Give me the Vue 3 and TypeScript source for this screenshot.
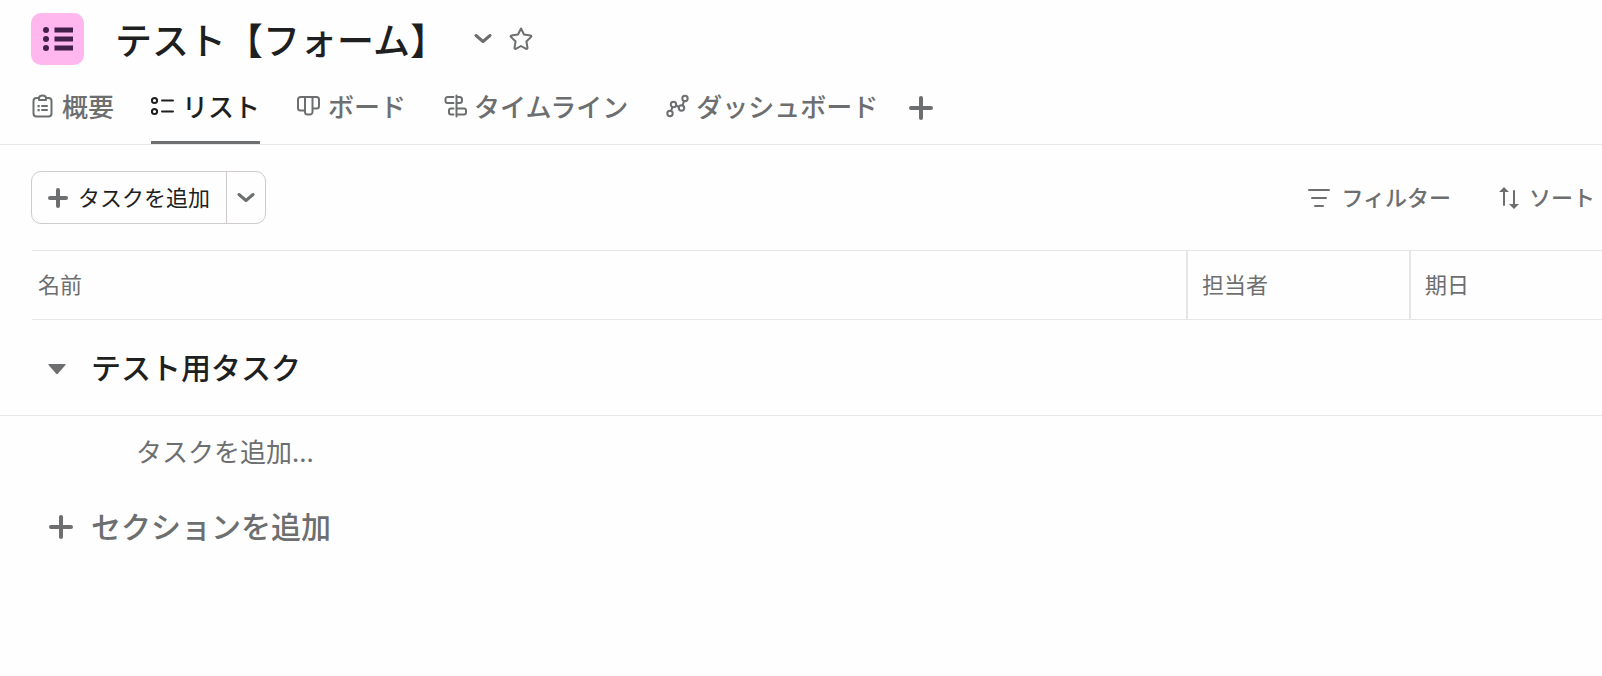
<script setup lang="ts">
import { ref } from 'vue'

type TabId = 'overview' | 'list' | 'board' | 'timeline' | 'dashboard'

const tabs: { id: TabId; label: string }[] = [
  { id: 'overview', label: '概要' },
  { id: 'list', label: 'リスト' },
  { id: 'board', label: 'ボード' },
  { id: 'timeline', label: 'タイムライン' },
  { id: 'dashboard', label: 'ダッシュボード' },
]

const active = ref<TabId>('list')
const open = ref(true)
</script>

<template>
  <div class="page">
    <header class="title-row">
      <span class="project-icon">
        <svg width="30" height="24" viewBox="0 0 30 24" fill="currentColor" aria-hidden="true">
          <circle cx="3" cy="3" r="3" /><circle cx="3" cy="12" r="3" /><circle cx="3" cy="21" r="3" />
          <path d="M11.500 .5h18.500v5h-18.500zM11.500 9.500h18.500v5h-18.500zM11.500 18.500h18.500v5h-18.500z" />
        </svg>
      </span>
      <h1>テスト【フォーム】</h1>
      <button class="icon-button" aria-label="プロジェクトのアクション">
        <svg width="18" height="10" viewBox="0 0 18 10" class="stroke-chevron"><path d="M2 1.500l7 6L16 1.500" /></svg>
      </button>
      <button class="icon-button star" aria-label="お気に入りに追加">
        <svg width="24" height="24" viewBox="0 0 24 24" class="stroke">
          <path d="M12 1.500l3 6 6.600 1c.8.1 1 .9.5 1.400l-4.700 4.600 1.100 6.400c.1.800-.6 1.300-1.300 1L12 19l-5.200 2.900c-.7.300-1.400-.2-1.300-1l1.100-6.400-4.700-4.600c-.5-.5-.3-1.300.5-1.400l6.600-1z" />
        </svg>
      </button>
    </header>

    <nav class="tabs">
      <a
        v-for="tab in tabs"
        :key="tab.id"
        href="#"
        class="tab"
        :class="{ active: tab.id === active }"
        @click.prevent="active = tab.id"
      >
        <svg width="24" height="24" viewBox="0 0 24 24" class="stroke" aria-hidden="true">
          <template v-if="tab.id === 'overview'">
            <path d="M7.500 4H5.500a3 3 0 0 0-3 3v12.500a3 3 0 0 0 3 3h12a3 3 0 0 0 3-3V7a3 3 0 0 0-3-3h-2M8 6h7V4c0-1.500-1.200-2.500-3.500-2.500S8 2.500 8 4zM11 12h5M11 16h5" />
            <path class="solid" d="M6.500 11h2.200v2.200H6.500zM6.500 15h2.200v2.200H6.500z" />
          </template>
          <template v-else-if="tab.id === 'list'">
            <circle cx="3.500" cy="6.500" r="2.600" /><circle cx="3.500" cy="17.500" r="2.600" />
            <path d="M11 6.500h11M11 17.500h11" />
          </template>
          <template v-else-if="tab.id === 'board'">
            <path d="M8 16.500H3.500a2.500 2.500 0 0 1-2.500-2.500V5.500A2.500 2.500 0 0 1 3.500 3h16A2.500 2.500 0 0 1 22 5.500V12a2.500 2.500 0 0 1-2.500 2.500h-4M8 3v15a2.500 2.500 0 0 0 2.500 2.500H13a2.500 2.500 0 0 0 2.500-2.500V3" />
          </template>
          <template v-else-if="tab.id === 'timeline'">
            <path d="M13.500 1.500v21M10.500 9H4.500A2 2 0 0 1 2.500 7V5a2 2 0 0 1 2-2h6M13.500 3h3A2.500 2.500 0 0 1 19 5.500v1A2.500 2.500 0 0 1 16.500 9h-3M10.500 20.500H8a2 2 0 0 1-2-2v-2a2 2 0 0 1 2-2h2.500M13.500 14.500H21a2 2 0 0 1 2 2v2a2 2 0 0 1-2 2h-7.500" />
          </template>
          <template v-else>
            <circle cx="5" cy="19.500" r="2.700" /><circle cx="8.500" cy="10.500" r="2.700" />
            <circle cx="16.500" cy="14" r="2.700" /><circle cx="20" cy="4.500" r="2.700" />
            <path d="M6 17l1.500-4M11 11.500l3 1.500M17.500 11.500l1.500-4.500" />
          </template>
        </svg>
        {{ tab.label }}
      </a>
      <button class="icon-button add-view" aria-label="ビューを追加">
        <svg width="24" height="24" viewBox="0 0 24 24" class="stroke-plus"><path d="M12 2v20M2 12h20" /></svg>
      </button>
    </nav>

    <div class="toolbar">
      <div class="split">
        <button class="add-task">
          <svg width="20" height="20" viewBox="0 0 20 20" class="stroke-plus"><path d="M10 2v16M2 10h16" /></svg>
          <span class="label">タスクを追加</span>
        </button>
        <button class="more" aria-label="その他の追加オプション">
          <svg width="18" height="10" viewBox="0 0 18 10" class="stroke-chevron"><path d="M2 1.500l7 6L16 1.500" /></svg>
        </button>
      </div>
      <div class="tools">
        <button class="tool">
          <svg width="24" height="20" viewBox="0 0 24 20" class="stroke"><path d="M2 2h20M5 10h14M8 18h8" /></svg>
          <span class="label">フィルター</span>
        </button>
        <button class="tool">
          <svg width="20" height="24" viewBox="0 0 20 24" class="stroke">
            <path d="M5 4v15M15 5v15" />
            <path class="solid" d="M5 1l5 5H0zM15 23l5-5H10z" />
          </svg>
          <span class="label">ソート</span>
        </button>
      </div>
    </div>

    <table class="columns">
      <thead>
        <tr>
          <th scope="col">名前</th>
          <th scope="col" class="assignee">担当者</th>
          <th scope="col" class="due">期日</th>
        </tr>
      </thead>
    </table>

    <section>
      <h2>
        <button class="toggle" :aria-expanded="open" aria-label="セクションを折りたたむ" @click="open = !open">
          <svg width="18" height="10" viewBox="0 0 18 10" fill="currentColor"><path d="M1 0h16q1 0 .5 1L10 9.500q-1 1-2 0L.5 1Q0 0 1 0z" /></svg>
        </button>
        <span class="label">テスト用タスク</span>
      </h2>
      <button v-if="open" class="new-task"><span class="label">タスクを追加...</span></button>
    </section>

    <button class="add-section">
      <svg width="24" height="24" viewBox="0 0 24 24" class="stroke-section"><path d="M12 2v20M2 12h20" /></svg>
      <span class="label">セクションを追加</span>
    </button>
  </div>
</template>

<style>
body {
  margin: 0;
  background: #fefefe;
}
</style>

<style scoped>
.page {
  color: #1e1f21;
  font-family: "Noto Sans CJK JP", sans-serif;
  overflow: hidden;
}

button {
  display: flex;
  align-items: center;
  margin: 0;
  padding: 0;
  border: 0;
  background: none;
  color: #6d6e6f;
  font: inherit;
  white-space: nowrap;
  cursor: pointer;
}

svg {
  display: block;
  flex: none;
}

.label {
  padding-bottom: 4px;
}

.stroke,
.stroke-chevron,
.stroke-section,
.stroke-plus {
  fill: none;
  stroke: currentColor;
  stroke-width: 2;
  stroke-linecap: round;
  stroke-linejoin: round;
}

.stroke-chevron {
  stroke-width: 3;
}

.stroke-section {
  stroke-width: 4;
}

.stroke-plus {
  stroke-width: 4;
}

.solid {
  fill: currentColor;
  stroke: none;
}

.title-row {
  display: flex;
  align-items: center;
  height: 52px;
  padding: 13px 31px 0;
}

.project-icon {
  display: flex;
  align-items: center;
  justify-content: center;
  width: 53px;
  height: 52px;
  margin-right: 31px;
  border-radius: 10px;
  background: #ffb7ed;
  color: #43204c;
}

h1 {
  margin: 0 27px 0 0;
  font-size: 37px;
  font-weight: 500;
  line-height: 52px;
}

.star {
  margin-left: 17px;
}

.tabs {
  display: flex;
  gap: 37px;
  height: 79px;
  padding: 0 31px;
  border-bottom: 1px solid #e6e6e6;
}

.tab {
  display: flex;
  align-items: center;
  gap: 7px;
  box-sizing: border-box;
  padding-top: 6px;
  border-bottom: 3px solid transparent;
  color: #6d6e6f;
  font-size: 26px;
  font-weight: 500;
  line-height: 38px;
  text-decoration: none;
  white-space: nowrap;
}

.tab.active {
  border-bottom-color: #6d6e6f;
  color: #1e1f21;
}

.add-view {
  margin-left: -6px;
  padding-top: 6px;
}

.toolbar {
  display: flex;
  align-items: center;
  justify-content: space-between;
  padding: 26px 7px 26px 31px;
  font-size: 22px;
}

.split {
  display: flex;
  box-sizing: border-box;
  height: 53px;
  border: 1px solid #cfcbcb;
  border-radius: 10px;
}

.add-task {
  gap: 10px;
  padding: 0 16px;
  color: #1e1f21;
}

.add-task svg {
  color: #6d6e6f;
}

.more {
  padding: 0 10px;
  border-left: 1px solid #cfcbcb;
}

.tools {
  display: flex;
  gap: 48px;
}

.tool {
  gap: 10px;
  font-weight: 500;
}

.columns {
  width: calc(100% - 32px);
  margin-left: 32px;
  border-collapse: separate;
  border-spacing: 0;
  table-layout: fixed;
}

.columns th {
  box-sizing: border-box;
  height: 70px;
  padding: 0 6px 4px;
  border-top: 1px solid #e6e6e6;
  border-bottom: 1px solid #e6e6e6;
  color: #6d6e6f;
  font-size: 22px;
  font-weight: 400;
  text-align: left;
}

.columns .assignee,
.columns .due {
  width: 223px;
  padding-left: 14px;
  border-left: 2px solid #e6e6e6;
}

.columns .due {
  width: 193px;
}

h2 {
  display: flex;
  align-items: center;
  gap: 25px;
  height: 95px;
  margin: 0;
  padding-left: 48px;
  border-bottom: 1px solid #e6e6e6;
  font-size: 30px;
  font-weight: 500;
}

.toggle {
  padding-top: 2px;
}

.new-task {
  width: 100%;
  height: 72px;
  padding-left: 136px;
  font-size: 26px;
}

.add-section {
  gap: 18px;
  height: 78px;
  padding-left: 49px;
  font-size: 30px;
  font-weight: 500;
}
</style>
